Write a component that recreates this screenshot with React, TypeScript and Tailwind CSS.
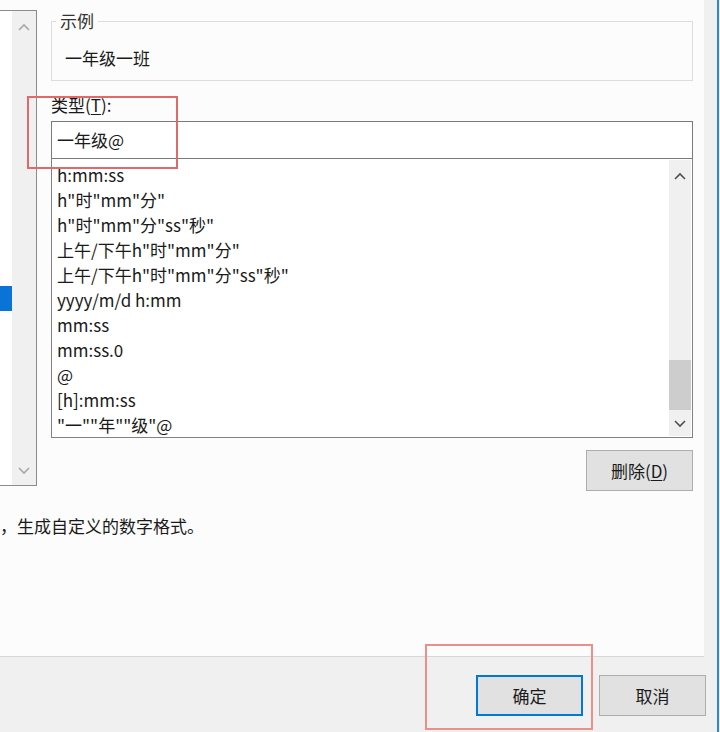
import React from 'react';

const FONT = { fontFamily: '"Noto Sans CJK SC", "Microsoft YaHei", sans-serif' };

const FORMATS = [
  'h:mm:ss',
  'h"时"mm"分"',
  'h"时"mm"分"ss"秒"',
  '上午/下午h"时"mm"分"',
  '上午/下午h"时"mm"分"ss"秒"',
  'yyyy/m/d h:mm',
  'mm:ss',
  'mm:ss.0',
  '@',
  '[h]:mm:ss',
  '"一""年""级"@',
];

function Chevron({ up, className }: { up?: boolean; className?: string }) {
  return (
    <svg width="12" height="8" viewBox="0 0 12 8" className={className}>
      <polyline
        points={up ? '1,7 6,2 11,7' : '1,1 6,6 11,1'}
        fill="none"
        stroke="currentColor"
        strokeWidth="1.6"
      />
    </svg>
  );
}

export default function App() {
  return (
    <div className="w-[720px] h-[732px] bg-[#f0f0f0] flex overflow-hidden text-[#1a1a1a]" style={FONT}>
      <div className="w-[717px] flex flex-col relative">
        {/* main white panel */}
        <div className="w-[704px] h-[657px] bg-[#fcfcfc] border-b border-[#d7d7d7] flex flex-col">
          <div className="flex">
            {/* left category list, cut off */}
            <div className="w-[37px] h-[476px] mt-[10px] border-t border-r border-b border-[#8c8c8c] flex">
              <div className="w-[12px] bg-white pt-[275px]">
                <div className="h-[25px] bg-[#0a74d6]" />
              </div>
              <div className="flex-1 bg-[#f0f0f0] flex flex-col items-center justify-between pt-[12px] pb-[10px] text-[#a8a8a8]">
                <Chevron up />
                <Chevron />
              </div>
            </div>

            <div className="ml-[14px] w-[642px] flex flex-col">
              <fieldset className="mt-[10px] h-[71px] border border-[#dcdcdc] px-[13px]">
                <legend className="ml-[-9px] px-[4px] text-[17px] leading-[22px] text-[#333]">示例</legend>
                <div className="text-[17px] leading-[24px] mt-[14px]">一年级一班</div>
              </fieldset>

              <div className="mt-[12px] text-[17px] leading-[24px]">
                类型(<span className="underline underline-offset-2">T</span>):
              </div>
              <div className="mt-[4px] h-[38px] border border-[#7a7a7a] bg-white flex items-center px-[5px] text-[17px]">
                一年级@
              </div>
              <div className="h-[279px] border border-t-0 border-[#828282] bg-white flex">
                <div className="flex-1 pl-[5px] pt-[3px]">
                  {FORMATS.map((f) => (
                    <div key={f} className="text-[17px] leading-[25px] whitespace-nowrap">
                      {f}
                    </div>
                  ))}
                </div>
                <div className="w-[22px] my-[1px] mr-[1px] bg-[#f0f0f0] flex flex-col items-center pt-[12px] pb-[8px] text-[#505050]">
                  <Chevron up />
                  <div className="flex-1 w-full flex flex-col justify-end pb-[10px]">
                    <div className="h-[50px] bg-[#cdcdcd] w-full" />
                  </div>
                  <Chevron />
                </div>
              </div>
              <div className="mt-[12px] flex justify-end">
                <button className="w-[107px] h-[41px] bg-[#e1e1e1] border border-[#adadad] text-[17px]">
                  删除(<span className="underline underline-offset-2">D</span>)
                </button>
              </div>
            </div>
          </div>

          <div className="mt-[23px] text-[17px] leading-[24px] whitespace-nowrap">，生成自定义的数字格式。</div>
        </div>

        {/* footer buttons */}
        <div className="flex justify-end gap-[16px] pt-[18px] pr-[11px]">
          <button className="w-[107px] h-[41px] bg-[#e1e1e1] border-2 border-[#0078d7] text-[17px]">确定</button>
          <button className="w-[107px] h-[41px] bg-[#e1e1e1] border border-[#adadad] text-[17px]">取消</button>
        </div>

        {/* red annotation boxes */}
        <div className="absolute left-[27px] top-[96px] w-[151px] h-[73px] border-2 border-[#e06a6a]" />
        <div className="absolute left-[425px] top-[644px] w-[168px] h-[86px] border-2 border-[#e8908e]" />
      </div>
      <div className="w-[2px] bg-[#2a86d8]" />
      <div className="w-[1px] bg-[#f0f0f0]" />
    </div>
  );
}
